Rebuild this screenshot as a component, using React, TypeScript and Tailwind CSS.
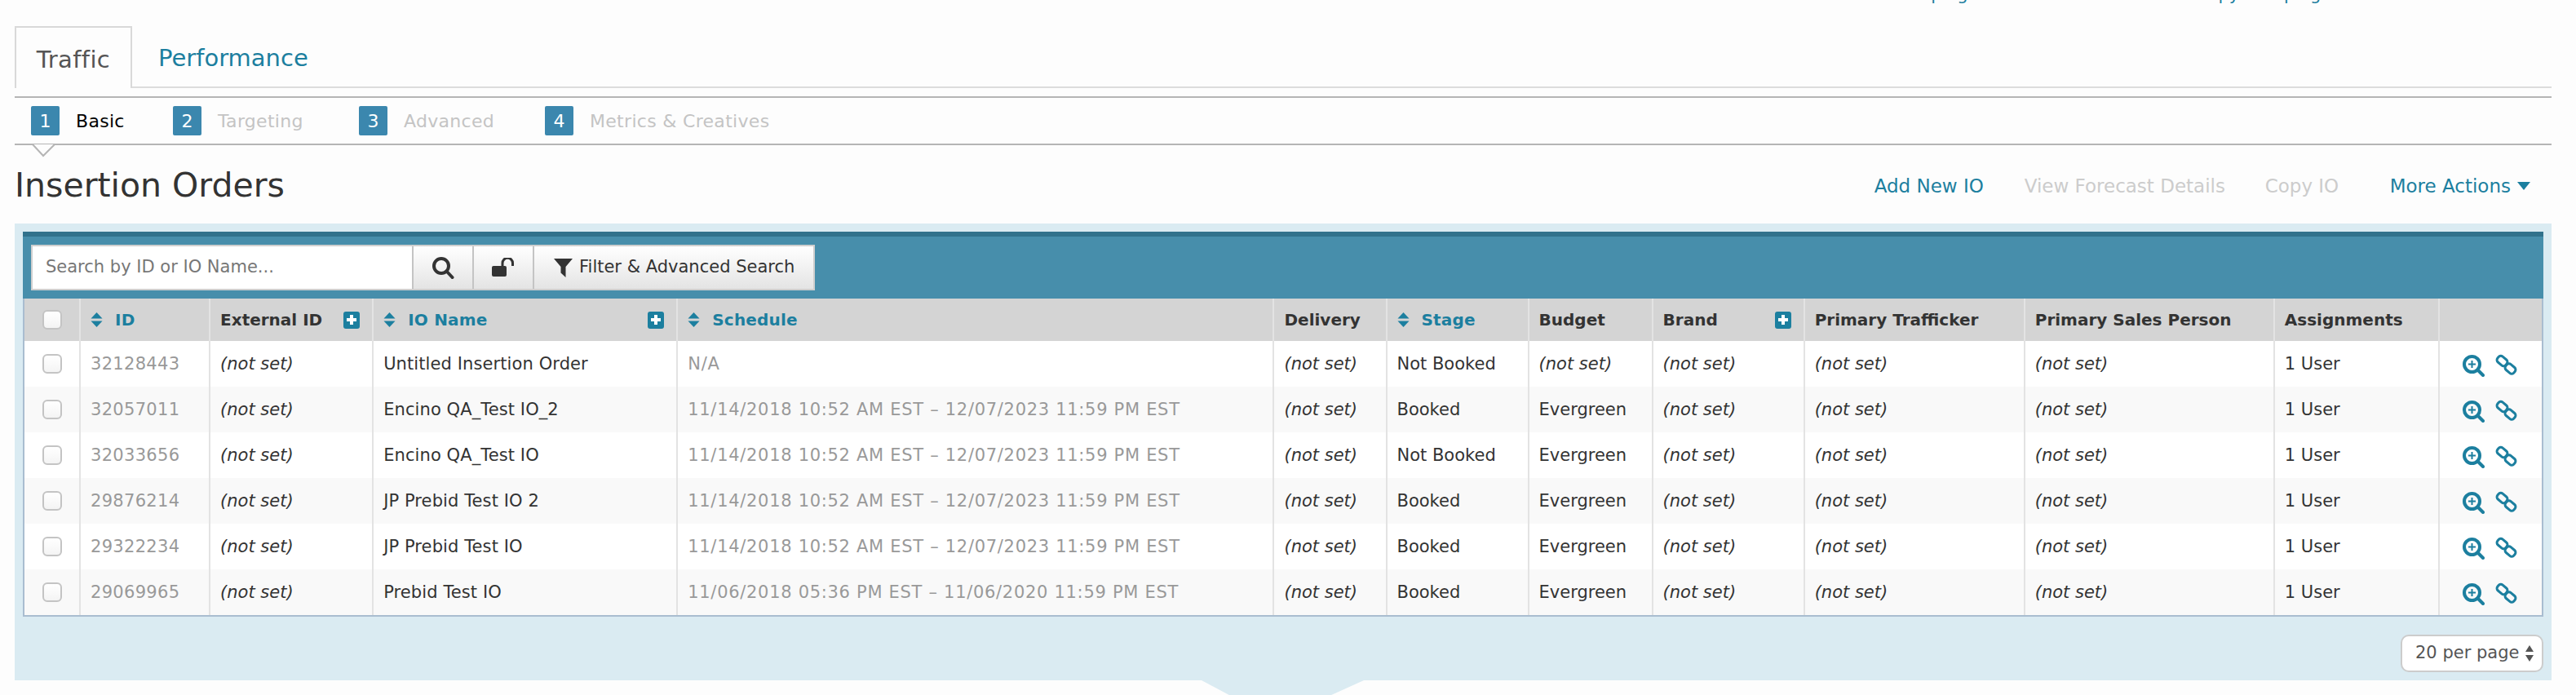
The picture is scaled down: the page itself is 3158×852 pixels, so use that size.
import React from 'react';

const font = "font-['DejaVu_Sans',sans-serif]";

interface Row {
    id: string;
    name: string;
    schedule: string;
    stage: string;
    budget: string;
}

const rows: Row[] = [
    { id: '32128443', name: 'Untitled Insertion Order', schedule: 'N/A', stage: 'Not Booked', budget: '' },
    { id: '32057011', name: 'Encino QA_Test IO_2', schedule: '11/14/2018 10:52 AM EST – 12/07/2023 11:59 PM EST', stage: 'Booked', budget: 'Evergreen' },
    { id: '32033656', name: 'Encino QA_Test IO', schedule: '11/14/2018 10:52 AM EST – 12/07/2023 11:59 PM EST', stage: 'Not Booked', budget: 'Evergreen' },
    { id: '29876214', name: 'JP Prebid Test IO 2', schedule: '11/14/2018 10:52 AM EST – 12/07/2023 11:59 PM EST', stage: 'Booked', budget: 'Evergreen' },
    { id: '29322234', name: 'JP Prebid Test IO', schedule: '11/14/2018 10:52 AM EST – 12/07/2023 11:59 PM EST', stage: 'Booked', budget: 'Evergreen' },
    { id: '29069965', name: 'Prebid Test IO', schedule: '11/06/2018 05:36 PM EST – 11/06/2020 11:59 PM EST', stage: 'Booked', budget: 'Evergreen' },
];

const colWidths = [68, 159, 200, 373, 731, 138, 174, 152, 186, 270, 306, 202, 126];

function SortIcon() {
    return (
        <svg width="15" height="18" viewBox="0 0 15 18" className="shrink-0 fill-[#1c7f9f]">
            <path d="M7.5 0 L14.5 7.5 L0.5 7.5 Z" />
            <path d="M7.5 18 L14.5 10.5 L0.5 10.5 Z" />
        </svg>
    );
}

function PlusBadge() {
    return (
        <span className="flex h-[21px] w-[20px] shrink-0 items-center justify-center rounded-[3px] bg-[#1c7f9f]">
            <svg width="14" height="14" viewBox="0 0 14 14" className="fill-white">
                <path d="M5 1h4v4h4v4H9v4H5V9H1V5h4z" />
            </svg>
        </span>
    );
}

function Checkbox() {
    return (
        <span className="block h-[24px] w-[24px] rounded-[6px] border-2 border-[#c4c4c4] bg-gradient-to-b from-[#ffffff] to-[#f4f4f4]" />
    );
}

function ZoomIcon() {
    return (
        <svg width="27" height="27" viewBox="0 0 27 27" fill="none" className="stroke-[#1c7f9f]">
            <circle cx="11.5" cy="11.5" r="9.5" strokeWidth="4" />
            <path d="M18.5 18.5 L25 25" strokeWidth="4" strokeLinecap="round" />
            <path d="M11.5 7 V16 M7 11.5 H16" strokeWidth="2" />
        </svg>
    );
}

function LinkIcon() {
    return (
        <svg width="27" height="27" viewBox="0 0 27 27" fill="none" className="-mt-[2px] stroke-[#1c7f9f]">
            <rect x="2" y="4" width="13" height="9" rx="3.5" strokeWidth="3" transform="rotate(40 8.5 8.5)" />
            <rect x="12" y="13.5" width="13" height="9" rx="3.5" strokeWidth="3" transform="rotate(40 18.5 18)" />
        </svg>
    );
}

function Step({ n, label, active, width }: { n: number; label: string; active?: boolean; width: string }) {
    return (
        <div className={`flex items-center ${width}`}>
            <span className="flex h-[36px] w-[35px] items-center justify-center rounded-[2px] bg-[#3b87ae] text-[22px] text-white">
                {n}
            </span>
            <span className={`ml-[20px] text-[22px] tracking-[0.3px] ${active ? 'text-black' : 'text-[#c4c4c4]'}`}>{label}</span>
        </div>
    );
}

function Th({ children, sort, plus, link }: { children?: React.ReactNode; sort?: boolean; plus?: boolean; link?: boolean }) {
    return (
        <th className="border-l-2 border-[#e3e3e3] p-0 pl-[12px] pr-[15px] text-left text-[20px] font-bold first:border-l-0">
            <div className="flex items-center">
                {sort && <span className="mr-[15px] flex"><SortIcon /></span>}
                <span className={link ? 'tracking-[0.2px] text-[#1c7f9f]' : 'text-[#333333]'}>{children}</span>
                {plus && <span className="ml-auto"><PlusBadge /></span>}
            </div>
        </th>
    );
}

function Td({ children, className = 'text-[#333333]' }: { children?: React.ReactNode; className?: string }) {
    return <td className={`truncate border-l-2 border-[#e3e3e3] p-0 pl-[12px] pt-[2px] text-[21px] ${className}`}>{children}</td>;
}

const NotSet = () => <i className="text-[#333333]">(not set)</i>;

export default function App() {
    return (
        <div className={`h-[852px] w-[3158px] overflow-hidden bg-[#fdfdfd] ${font}`}>
            <div className="h-[32px] overflow-hidden">
                <div className="-mt-[19px] ml-[2272px] flex text-[21px] leading-[24px] text-[#1c7f9f]">
                    <span className="w-[256px]">Edit Campaign</span>
                    <span className="w-[164px]">View Details</span>
                    <span className="w-[228px]">Copy Campaign</span>
                    <span>More Actions</span>
                </div>
            </div>

            <div className="mx-[18px] w-[3110px]">
                <div className="flex h-[76px] items-stretch border-b-2 border-[#dcdcdc]">
                    <div className="-mb-[2px] flex w-[144px] items-center justify-center border-x-2 border-t-2 border-[#d9d9d9] bg-[#fdfdfd] pt-[5px] text-[29px] tracking-[0.4px] text-[#555555]">
                        Traffic
                    </div>
                    <div className="ml-[32px] flex items-center pt-[5px] text-[29px] text-[#1c7f9f]">Performance</div>
                </div>

                <div className="relative mt-[10px] flex h-[60px] items-center border-y-2 border-[#b5b5b5] pl-[20px]">
                    <Step n={1} label="Basic" active width="w-[174px]" />
                    <Step n={2} label="Targeting" width="w-[228px]" />
                    <Step n={3} label="Advanced" width="w-[228px]" />
                    <Step n={4} label="Metrics & Creatives" width="w-[300px]" />
                    <svg width="30" height="17" viewBox="0 0 30 17" className="absolute left-[21px] top-[56px] fill-[#fdfdfd] stroke-[#b5b5b5]">
                        <path d="M1 1 L14 15 L28 1" strokeWidth="2" />
                    </svg>
                </div>

                <div className="flex h-[96px] items-center justify-between pt-[4px]">
                    <h1 className="text-[41px] font-normal text-[#333333]">Insertion Orders</h1>
                    <div className="mr-[26px] flex items-center text-[23px]">
                        <span className="w-[184px] text-[#1c7f9f]">Add New IO</span>
                        <span className="w-[295px] text-[#cccccc]">View Forecast Details</span>
                        <span className="w-[153px] text-[#cccccc]">Copy IO</span>
                        <span className="text-[#1c7f9f]">More Actions</span>
                        <span className="ml-[8px] h-0 w-0 border-x-[8px] border-t-[10px] border-x-transparent border-t-[#1c7f9f]" />
                    </div>
                </div>

                <div className="h-[560px] bg-[#daebf2] px-[10px] pt-[10px]">
                    <div className="flex h-[82px] items-start border-t-[6px] border-[#31728c] bg-[#478eab] pl-[10px] pt-[10px]">
                        <div className="flex h-[56px] border-2 border-[#cfcfcf] bg-white">
                            <div className="flex w-[465px] items-center pl-[16px] text-[21px] text-[#777777]">
                                Search by ID or IO Name...
                            </div>
                            <div className="flex w-[74px] items-center justify-center border-l-2 border-[#c4c4c4] bg-gradient-to-b from-[#ffffff] to-[#e4e4e4]">
                                <svg width="28" height="28" viewBox="0 0 28 28" fill="none" stroke="#333333" strokeWidth="4">
                                    <circle cx="12" cy="12" r="9" />
                                    <path d="M18.5 18.5 L25.5 26" strokeLinecap="round" />
                                </svg>
                            </div>
                            <div className="flex w-[74px] items-center justify-center border-l-2 border-[#c4c4c4] bg-gradient-to-b from-[#ffffff] to-[#e4e4e4]">
                                <svg width="28" height="24" viewBox="0 0 28 24" fill="none">
                                    <rect x="0" y="10" width="18" height="13" rx="2" fill="#333333" />
                                    <path d="M13 10 V6.5 A6 6 0 0 1 25.5 6.5 V10" stroke="#333333" strokeWidth="3" />
                                </svg>
                            </div>
                            <div className="flex w-[344px] items-center border-l-2 border-[#c4c4c4] bg-gradient-to-b from-[#ffffff] to-[#e4e4e4] pl-[24px] text-[21px] text-[#333333]">
                                <svg width="23" height="23" viewBox="0 0 23 23" className="mr-[8px] fill-[#333333]">
                                    <path d="M0 0 H23 L14.5 10 V23 L8.5 17.5 V10 Z" />
                                </svg>
                                Filter &amp; Advanced Search
                            </div>
                        </div>
                    </div>

                    <div className="border-x-[2px] border-b-[2px] border-[#a9bdd0] bg-white">
                        <table className="w-[3086px] table-fixed border-collapse">
                            <colgroup>
                                {colWidths.map((w, i) => (
                                    <col key={i} style={{ width: w }} />
                                ))}
                            </colgroup>
                            <thead>
                                <tr className="h-[52px] bg-[#d4d4d4]">
                                    <th className="p-0 pl-[22px]"><Checkbox /></th>
                                    <Th sort link>ID</Th>
                                    <Th plus>External ID</Th>
                                    <Th sort link plus>IO Name</Th>
                                    <Th sort link>Schedule</Th>
                                    <Th>Delivery</Th>
                                    <Th sort link>Stage</Th>
                                    <Th>Budget</Th>
                                    <Th plus>Brand</Th>
                                    <Th>Primary Trafficker</Th>
                                    <Th>Primary Sales Person</Th>
                                    <Th>Assignments</Th>
                                    <Th />
                                </tr>
                            </thead>
                            <tbody>
                                {rows.map((r, i) => (
                                    <tr key={r.id} className={`h-[56px] ${i % 2 === 1 ? 'bg-[#f9f9f9]' : 'bg-white'}`}>
                                        <td className="p-0 pl-[22px]"><Checkbox /></td>
                                        <Td className="tracking-[0.3px] text-[#999999]">{r.id}</Td>
                                        <Td><NotSet /></Td>
                                        <Td className="tracking-[0.1px] text-[#333333]">{r.name}</Td>
                                        <Td className="tracking-[0.7px] text-[#999999]">{r.schedule}</Td>
                                        <Td><NotSet /></Td>
                                        <Td>{r.stage}</Td>
                                        <Td>{r.budget || <NotSet />}</Td>
                                        <Td><NotSet /></Td>
                                        <Td><NotSet /></Td>
                                        <Td><NotSet /></Td>
                                        <Td>1 User</Td>
                                        <td className="border-l-2 border-[#e3e3e3] p-0">
                                            <div className="flex items-center gap-[13px] pl-[28px] pt-[5px]">
                                                <ZoomIcon />
                                                <LinkIcon />
                                            </div>
                                        </td>
                                    </tr>
                                ))}
                            </tbody>
                        </table>
                    </div>

                    <div className="mt-[22px] flex justify-end">
                        <div className="flex h-[46px] w-[175px] items-center rounded-[10px] border-2 border-[#cccccc] bg-white pl-[16px] text-[21px] text-[#555555]">
                            20 per page
                            <svg width="10" height="20" viewBox="0 0 10 20" className="ml-[8px] fill-[#555555]">
                                <path d="M5 0 L10 8 L0 8 Z M5 20 L10 12 L0 12 Z" />
                            </svg>
                        </div>
                    </div>
                </div>

                <div className="ml-[1455px] h-[18px] w-[199px] bg-[#daebf2] [clip-path:polygon(0_0,100%_0,80%_100%,17%_100%)]" />
            </div>
        </div>
    );
}
